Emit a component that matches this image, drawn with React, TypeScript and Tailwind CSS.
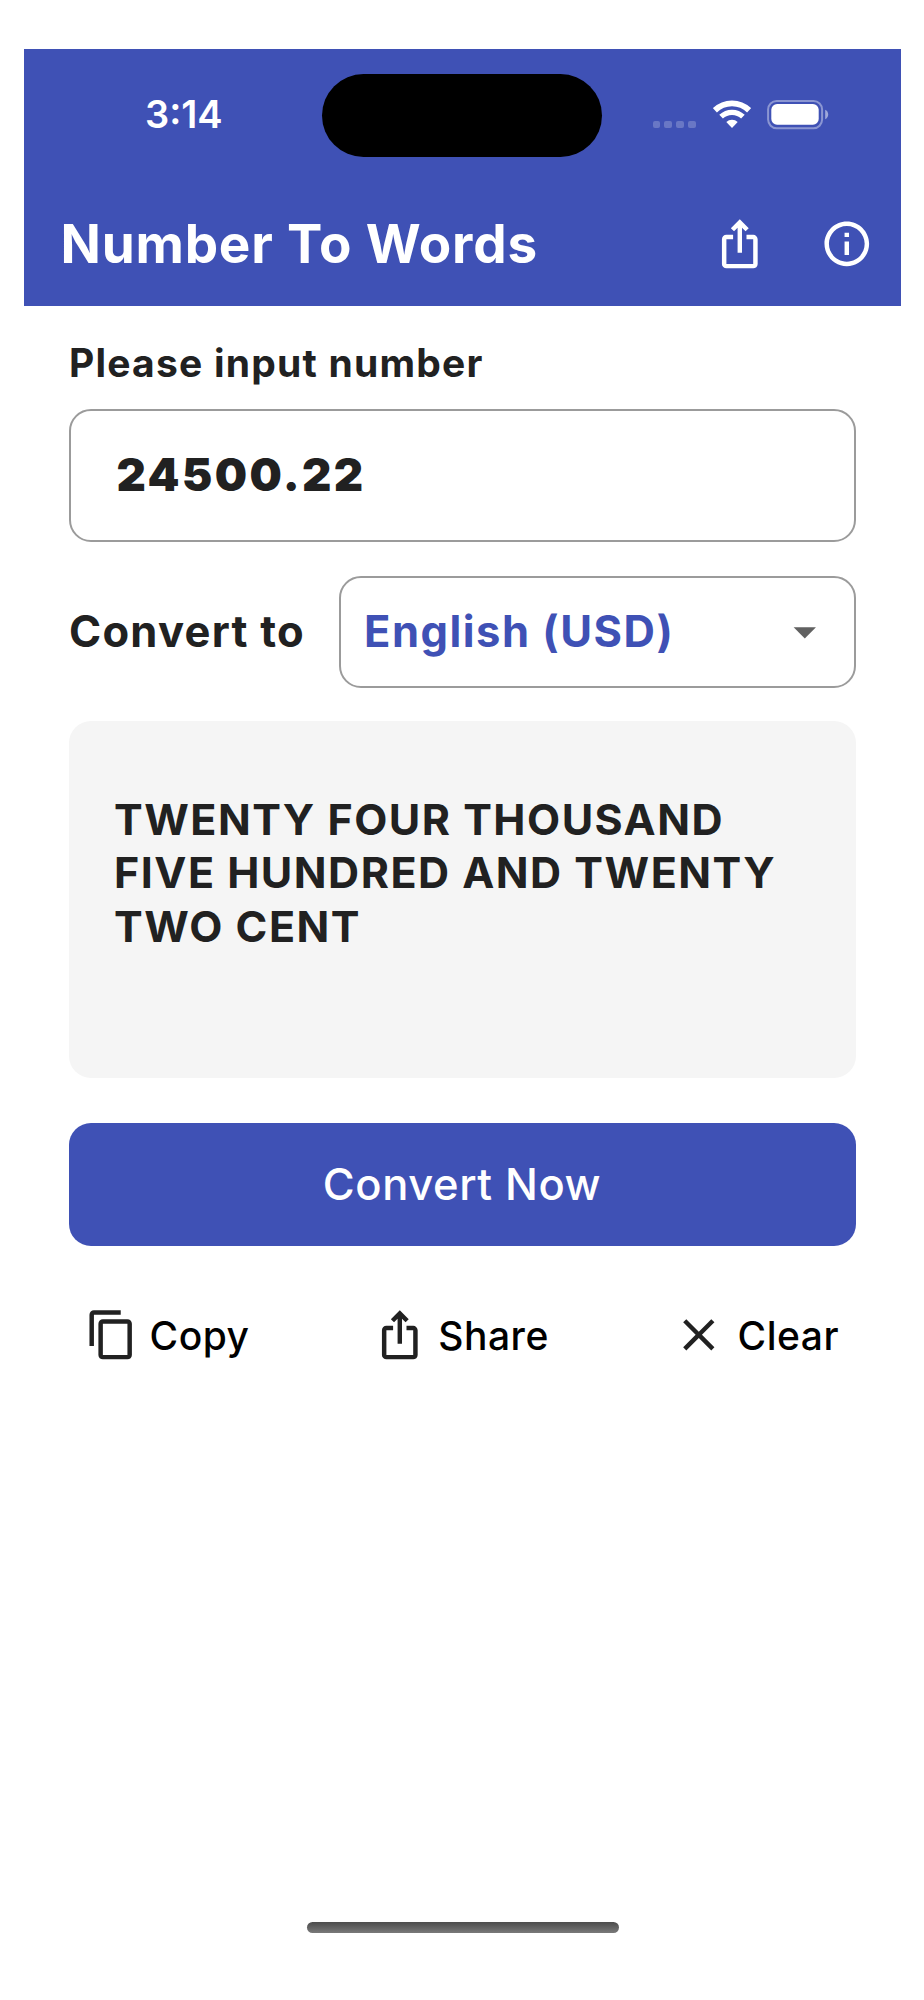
import { useState, type ReactNode } from 'react';
import { MdArrowDropDown, MdClose, MdContentCopy, MdInfoOutline, MdIosShare } from 'react-icons/md';

function SignalDots() {
  return (
    <div className="flex gap-[4.2px] pt-[20.5px]">
      {[0, 1, 2, 3].map((dot) => (
        <span key={dot} className="h-[7.8px] w-[7.8px] rounded-[2px] bg-white/22" />
      ))}
    </div>
  );
}

function WifiIcon() {
  return (
    <svg viewBox="0 0 38 28" className="h-[28px] w-[38px]" fill="none" stroke="white">
      <path d="M1.9 10.3A24.6 24.6 0 0 1 36.1 10.3" strokeWidth="5.8" />
      <path d="M8.1 16.7A15.7 15.7 0 0 1 29.9 16.7" strokeWidth="5.2" />
      <path d="M13.3 22.1A8.2 8.2 0 0 1 24.7 22.1L19 27.9Z" fill="white" stroke="none" />
    </svg>
  );
}

function BatteryIcon() {
  return (
    <svg viewBox="0 0 62 30" className="h-[30px] w-[62px]" fill="white">
      <rect x="1.1" y="1" width="54" height="27.2" rx="8.6" fill="none" stroke="white" strokeOpacity="0.4" strokeWidth="2" />
      <rect x="4.3" y="4" width="47.4" height="20.8" rx="5.8" />
      <path d="M58.2 9.8C60 10.6 61.2 12.4 61.2 14.5C61.2 16.6 60 18.4 58.2 19.2Z" fillOpacity="0.5" />
    </svg>
  );
}

function StatusBar() {
  return (
    <div className="flex h-[107.5px] items-start pt-[25px]">
      <div className="w-[298.5px] pt-[17px] pl-[121.5px] text-[38px] leading-[46px] font-semibold">3:14</div>
      <div className="h-[82.5px] w-[279.5px] shrink-0 rounded-full bg-black" />
      <div className="flex items-start gap-[16.5px] pt-[26px] pl-[51px]">
        <SignalDots />
        <WifiIcon />
        <BatteryIcon />
      </div>
    </div>
  );
}

function ActionButton({ icon, label, onClick }: { icon: ReactNode; label: string; onClick?: () => void }) {
  return (
    <button
      type="button"
      onClick={onClick}
      className="flex items-center gap-[11.5px] text-[39px] leading-[54px] font-[450] tracking-[0.5px] text-black"
    >
      <span className="text-[53.6px] text-[#212121]">{icon}</span>
      <span className="pt-[2px]">{label}</span>
    </button>
  );
}

export default function App() {
  const [amount, setAmount] = useState('24500.22');
  const [words, setWords] = useState('TWENTY FOUR THOUSAND FIVE HUNDRED AND TWENTY TWO CENT');

  function onClear() {
    setAmount('');
    setWords('');
  }

  return (
    <div className="flex h-[2000px] w-[924px] flex-col bg-white pt-[49px] font-['Inter',sans-serif] text-[#212121]">
      <header className="mx-auto h-[257px] w-[877px] bg-[#3f51b5] text-white">
        <StatusBar />
        <div className="flex h-[149.5px] items-center pt-[24.5px] pr-[26.5px] pl-[37px]">
          <h1 className="pt-[2px] text-[53px] leading-none font-bold tracking-[0.8px] whitespace-nowrap">Number To Words</h1>
          <div className="ml-auto flex gap-[53.5px] text-[53.6px]">
            <MdIosShare />
            <MdInfoOutline />
          </div>
        </div>
      </header>

      <main className="flex flex-col px-[68.5px] pt-[33px]">
        <label htmlFor="amount" className="pl-[0.5px] text-[39px] leading-[48px] font-[650] tracking-[1.22px] whitespace-nowrap">
          Please input number
        </label>
        <input
          id="amount"
          value={amount}
          onChange={(e) => setAmount(e.target.value)}
          className="mt-[22px] h-[133px] w-full rounded-[22px] border-2 border-[#9b9b9b] px-[46px] pb-[2px] text-[45.5px] font-black tracking-[2.4px]"
        />

        <div className="mt-[34px] flex h-[112px] items-center">
          <span className="w-[270px] pl-[0.5px] text-[43.5px] font-[650] tracking-[1.25px] whitespace-nowrap">Convert to</span>
          <button
            type="button"
            className="flex h-full flex-1 items-center justify-between rounded-[22px] border-2 border-[#9b9b9b] pr-[22px] pl-[23.5px] text-[43.5px] font-[650] tracking-[1.5px] whitespace-nowrap text-[#3f51b5]"
          >
            English (USD)
            <MdArrowDropDown className="text-[53.6px] text-[#616161]" />
          </button>
        </div>

        <div className="mt-[33px] h-[357px] rounded-[22px] bg-[#f5f5f5] px-[45.5px] pt-[71.5px] text-[43px] leading-[53.6px] font-[650] tracking-[1.5px]">
          {words}
        </div>

        <button
          type="button"
          className="mt-[45px] h-[123px] rounded-[22px] bg-[#3f51b5] text-[43.5px] font-medium tracking-[0.6px] text-white"
        >
          Convert Now
        </button>

        <div className="mt-[60.5px] flex justify-between pr-[16.5px] pl-[16px]">
          <ActionButton icon={<MdContentCopy />} label="Copy" />
          <ActionButton icon={<MdIosShare />} label="Share" />
          <ActionButton icon={<MdClose />} label="Clear" onClick={onClear} />
        </div>
      </main>

      <div className="mt-auto mb-[67.5px] ml-[306.5px] h-[11px] w-[312.5px] rounded-full bg-linear-to-b from-[#4c4c4c] to-[#7a7a7a]" />
    </div>
  );
}
